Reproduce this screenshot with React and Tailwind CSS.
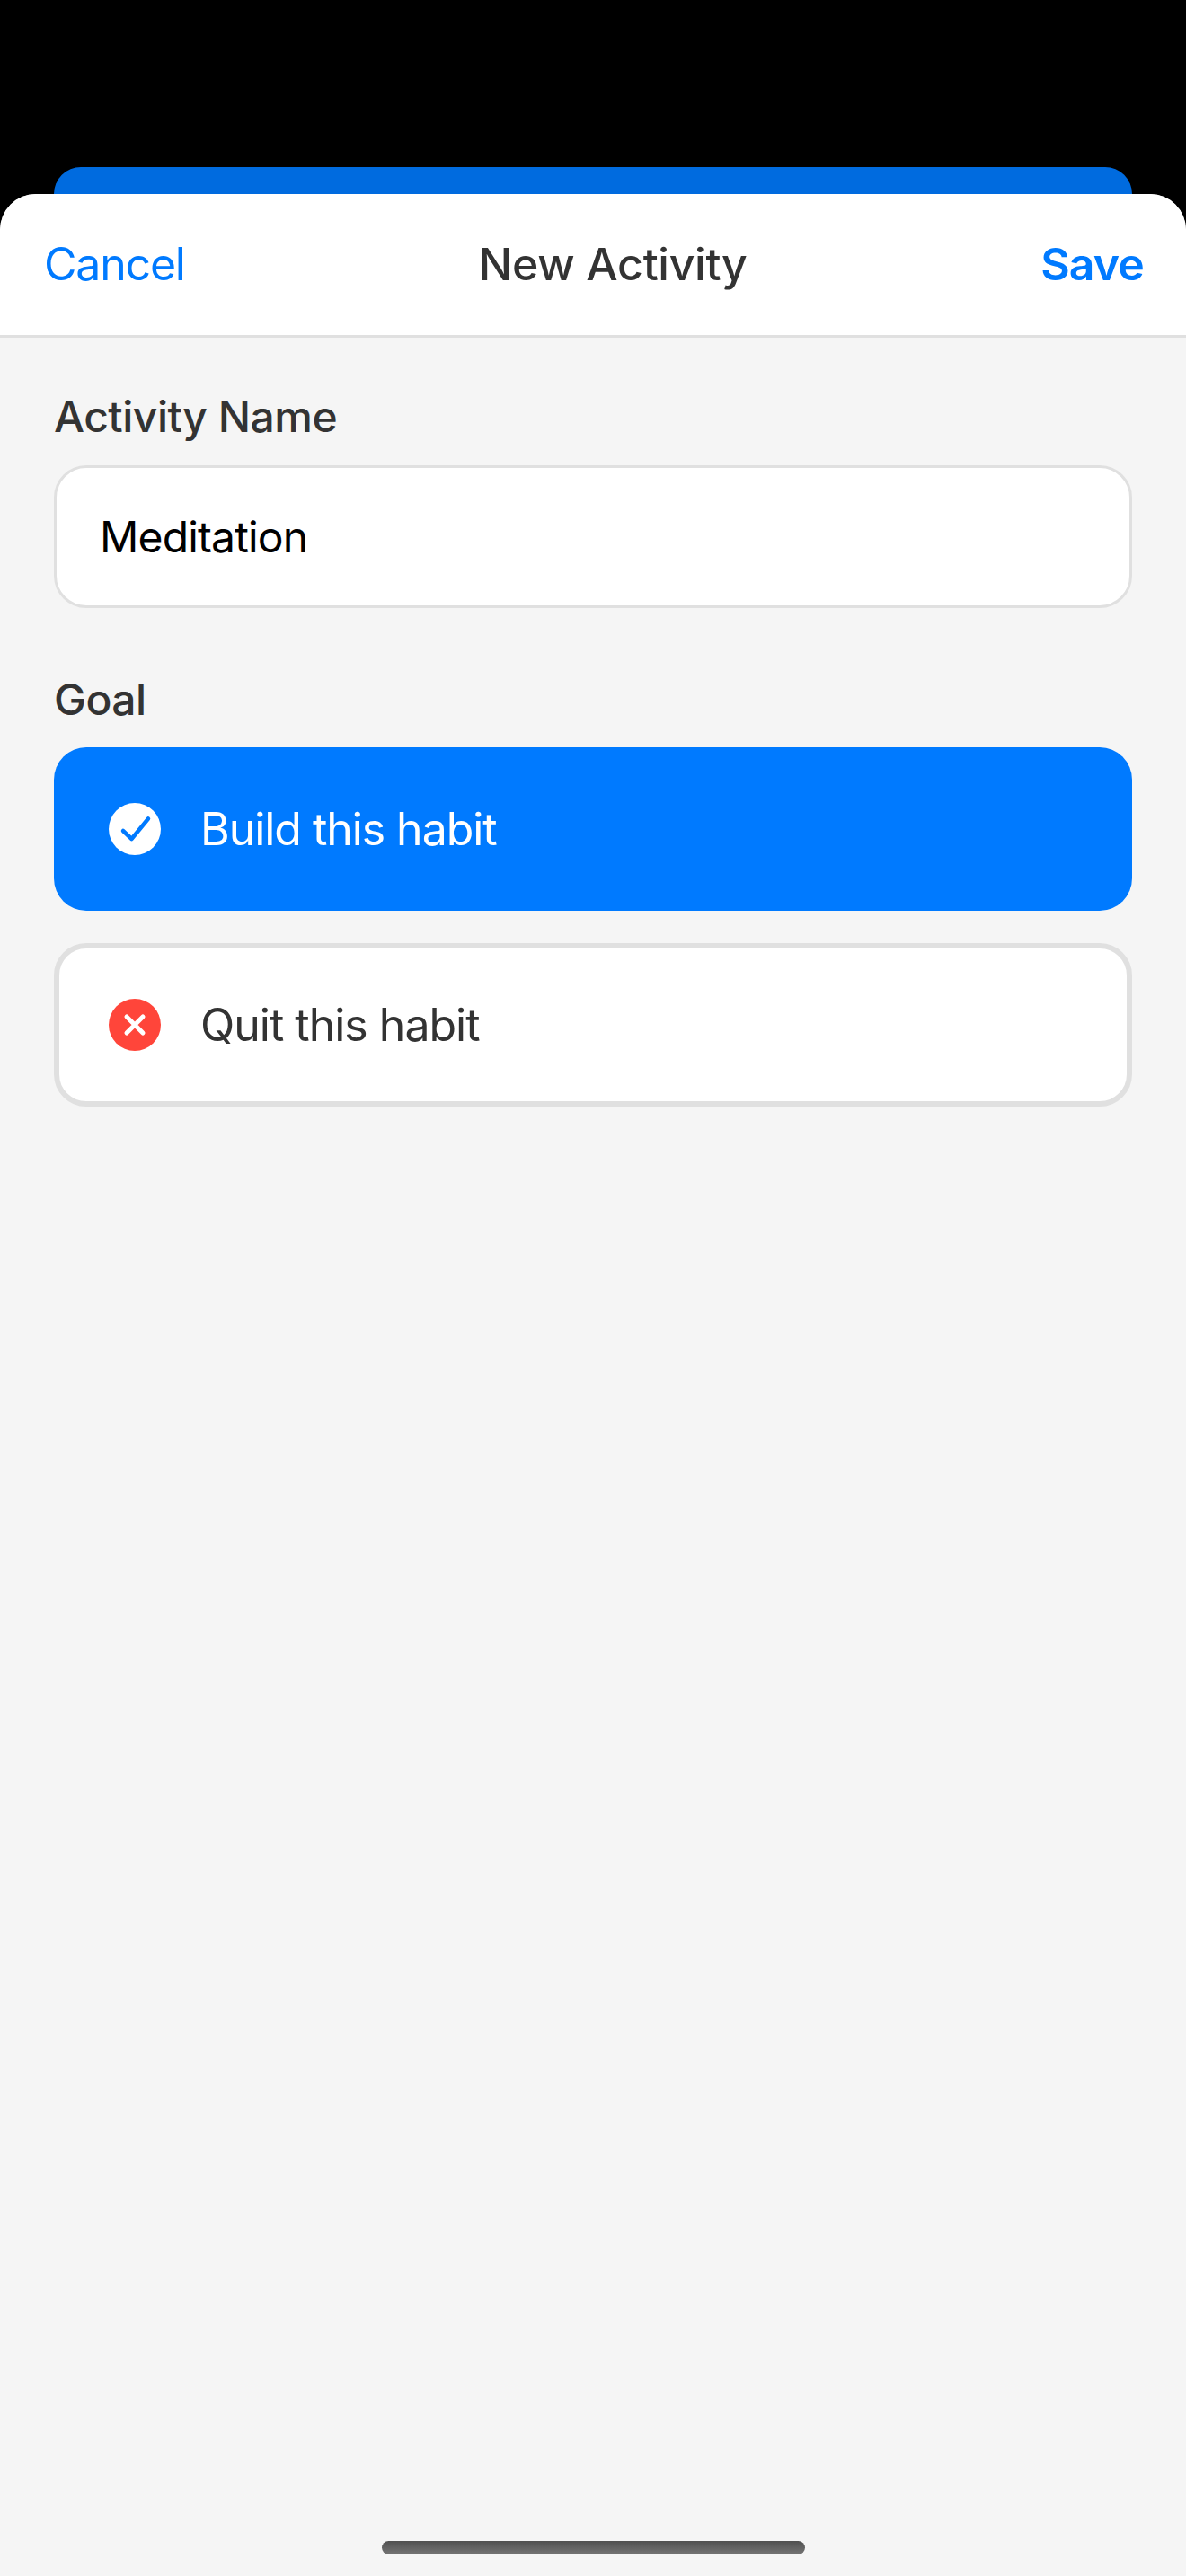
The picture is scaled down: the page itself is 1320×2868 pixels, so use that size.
import { useState } from "react";

function BuildIcon() {
  return (
    <svg width="58" height="58" viewBox="0 0 58 58" className="shrink-0">
      <circle cx="29" cy="29" r="29" fill="#fff" />
      <path d="M16 31 L25.5 40 L44 17.5" fill="none" stroke="#007aff" strokeWidth="4.5" strokeLinecap="round" strokeLinejoin="round" />
    </svg>
  );
}

function QuitIcon() {
  return (
    <svg width="58" height="58" viewBox="0 0 58 58" className="shrink-0">
      <circle cx="29" cy="29" r="29" fill="#ff453a" />
      <path d="M20 20 L38 38 M38 20 L20 38" fill="none" stroke="#fff" strokeWidth="5" strokeLinecap="round" />
    </svg>
  );
}

export default function App() {
  const [name, setName] = useState("Meditation");

  return (
    <div className="flex h-[2868px] w-[1320px] flex-col bg-black font-['Inter',sans-serif]">
      {/* Card peeking out behind the sheet */}
      <div className="mx-[60px] mt-[186px] h-[30px] shrink-0 rounded-t-[36px] bg-[#006bdf]" />

      <div className="flex flex-1 flex-col overflow-hidden rounded-t-[40px] bg-[#f5f5f5]">
        {/* Header */}
        <div className="flex h-[160px] shrink-0 items-center justify-between border-b-[3px] border-[#e0e0e0] bg-white pr-[47px] pb-[1px] pl-[49px]">
          <button className="text-[50px] tracking-[-1.2px] text-[#007aff]">Cancel</button>
          <span className="text-[50px] font-medium tracking-[-0.3px] text-[#333333]">New Activity</span>
          <button className="text-[50px] font-semibold tracking-[-0.9px] text-[#007aff]">Save</button>
        </div>

        {/* Form */}
        <div className="flex flex-col px-[60px] pt-[59px]">
          <label className="text-[48px] leading-[58px] font-medium tracking-[-0.5px] text-[#333333]">Activity Name</label>
          <input
            value={name}
            onChange={(e) => setName(e.target.value)}
            className="mt-[25px] h-[159px] rounded-[36px] border-[3px] border-[#e0e0e0] bg-white px-[48px] text-[48px] tracking-[-0.85px] text-black outline-none"
          />

          <label className="mt-[73px] text-[48px] leading-[58px] font-medium tracking-[-0.5px] text-[#333333]">Goal</label>
          <div className="mt-[24px] flex flex-col gap-[36px]">
            <button className="flex h-[182px] items-center gap-[44px] rounded-[36px] bg-[#007aff] px-[61px] text-left text-[50px] tracking-[-1.05px] text-white">
              <BuildIcon />
              Build this habit
            </button>
            <button className="flex h-[182px] items-center gap-[44px] rounded-[36px] border-[6px] border-[#e0e0e0] bg-white px-[55px] text-left text-[50px] tracking-[-1px] text-[#333333]">
              <QuitIcon />
              Quit this habit
            </button>
          </div>
        </div>

        {/* Home indicator */}
        <div className="mx-auto mt-auto mb-[24px] h-[15px] w-[471px] rounded-[8px] bg-gradient-to-b from-[#505050] to-[#757575]" />
      </div>
    </div>
  );
}
